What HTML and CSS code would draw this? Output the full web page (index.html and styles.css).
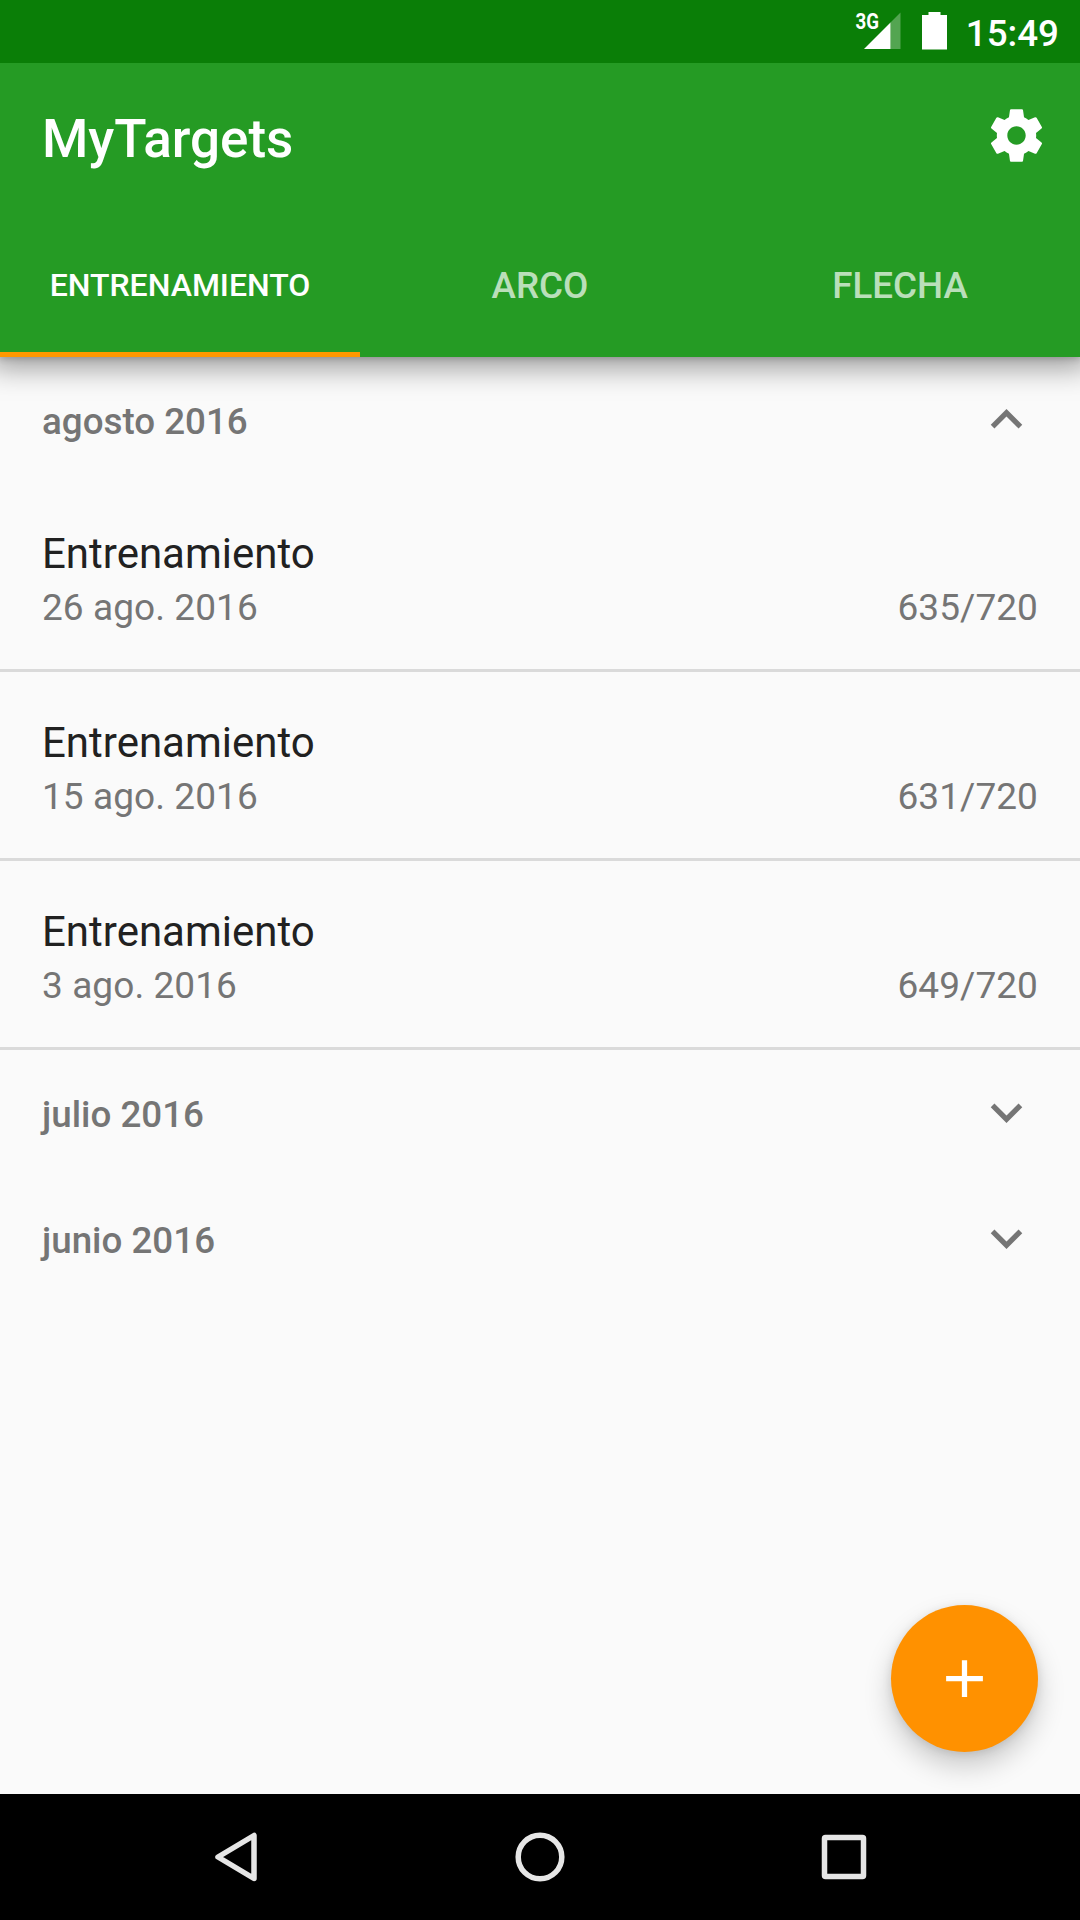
FILE: index.html
```html
<!DOCTYPE html>
<html lang="es">
<head>
<meta charset="utf-8">
<title>MyTargets</title>
<link rel="stylesheet" href="styles.css">
</head>
<body>
<div class="screen">
  <header class="app-header">
    <div class="status-bar">
      <svg class="status-icon signal" viewBox="0 0 48 63">
        <text class="network" x="2.500" y="29" textLength="23.500" lengthAdjust="spacingAndGlyphs">3G</text>
        <path d="M11 49L37.500 22.500V49z" fill="#fff"/>
        <path d="M37.500 22.500L47.500 12.500V49H37.500z" fill="#fff" opacity=".3"/>
      </svg>
      <svg class="status-icon battery" viewBox="0 0 25 63"><path d="M6.500 12H18.500V15H25V49.500H0V15H6.500z" fill="#fff"/></svg>
      <span class="clock">15:49</span>
    </div>
    <div class="toolbar">
      <h1 class="title">MyTargets</h1>
      <svg class="icon gear" viewBox="0 0 24 24"><path d="M19.430 12.980c.04-.32.07-.64.07-.98s-.03-.66-.07-.98l2.110-1.650c.19-.15.24-.42.12-.64l-2-3.460c-.12-.22-.39-.3-.61-.22l-2.490 1c-.52-.4-1.080-.73-1.690-.98l-.38-2.650C14.460 2.180 14.250 2 14 2h-4c-.25 0-.46.18-.49.42l-.38 2.650c-.61.25-1.170.59-1.690.98l-2.490-1c-.23-.09-.49 0-.61.22l-2 3.460c-.13.22-.07.49.12.64l2.110 1.650c-.04.32-.07.65-.07.98s.03.66.07.98l-2.110 1.650c-.19.15-.24.42-.12.64l2 3.460c.12.22.39.3.61.22l2.490-1c.52.4 1.080.73 1.690.98l.38 2.650c.03.24.24.42.49.42h4c.25 0 .46-.18.49-.42l.38-2.650c.61-.25 1.170-.59 1.690-.98l2.490 1c.23.09.49 0 .61-.22l2-3.460c.12-.22.07-.49-.12-.64l-2.110-1.650zM12 15.500c-1.930 0-3.500-1.570-3.500-3.500s1.570-3.500 3.500-3.500 3.500 1.570 3.500 3.500-1.570 3.500-3.500 3.500z"/></svg>
    </div>
    <nav class="tabs">
      <span class="tab active">ENTRENAMIENTO</span>
      <span class="tab">ARCO</span>
      <span class="tab">FLECHA</span>
    </nav>
  </header>

  <main class="list">
    <div class="month">
      <span>agosto 2016</span>
      <svg class="icon" viewBox="0 0 24 24"><path d="M12 8l-6 6 1.410 1.410L12 10.830l4.590 4.580L18 14z"/></svg>
    </div>
    <div class="entry">
      <div class="name">Entrenamiento</div>
      <div class="detail"><span>26 ago. 2016</span><span>635/720</span></div>
    </div>
    <div class="entry">
      <div class="name">Entrenamiento</div>
      <div class="detail"><span>15 ago. 2016</span><span>631/720</span></div>
    </div>
    <div class="entry">
      <div class="name">Entrenamiento</div>
      <div class="detail"><span>3 ago. 2016</span><span>649/720</span></div>
    </div>
    <div class="month">
      <span>julio 2016</span>
      <svg class="icon" viewBox="0 0 24 24"><path d="M16.590 8.590L12 13.170 7.410 8.590 6 10l6 6 6-6z"/></svg>
    </div>
    <div class="month">
      <span>junio 2016</span>
      <svg class="icon" viewBox="0 0 24 24"><path d="M16.590 8.590L12 13.170 7.410 8.590 6 10l6 6 6-6z"/></svg>
    </div>
    <div class="fab">
      <svg class="icon" viewBox="0 0 24 24"><path d="M19 13h-6v6h-2v-6H5v-2h6V5h2v6h6z"/></svg>
    </div>
  </main>

  <footer class="nav-bar">
    <svg class="nav-icon" viewBox="0 0 60 60"><path d="M12 30L48 8.500V51.500z"/></svg>
    <svg class="nav-icon" viewBox="0 0 60 60"><circle cx="30" cy="30" r="21.800"/></svg>
    <svg class="nav-icon" viewBox="0 0 60 60"><rect x="10.500" y="10.500" width="39" height="39" rx="1"/></svg>
  </footer>
</div>
</body>
</html>
```

FILE: styles.css
```css
* {
  box-sizing: border-box;
}

body {
  margin: 0;
  font-family: Roboto, "Noto Sans", sans-serif;
  background: #fafafa;
}

.screen {
  display: flex;
  flex-direction: column;
  width: 1080px;
  height: 1920px;
  overflow: hidden;
}

.app-header {
  position: relative;
  z-index: 1;
  height: 357px;
  background: #259b24;
  color: #fff;
  box-shadow: 0 0 28px 10px rgba(0, 0, 0, .4), 0 2px 6px rgba(0, 0, 0, .14);
}

.status-bar {
  display: flex;
  align-items: center;
  justify-content: flex-end;
  height: 63px;
  padding-right: 21px;
  background: #0a7e07;
}

.status-icon {
  height: 63px;
}

.signal {
  width: 48px;
  margin-right: 21px;
}

.battery {
  width: 25px;
  margin-right: 19px;
}

.network {
  font-size: 21.500px;
  font-weight: 700;
  fill: #fff;
}

.clock {
  font-size: 36.750px;
  font-weight: 500;
  line-height: 63px;
  padding-top: 3px;
}

.toolbar {
  display: flex;
  align-items: center;
  justify-content: space-between;
  height: 147px;
  padding: 0 32px 0 42px;
}

.title {
  margin: 0;
  padding-top: 5px;
  font-size: 53px;
  font-weight: 500;
}

.icon {
  width: 63px;
  height: 63px;
  fill: currentColor;
}

.gear {
  margin-bottom: 2px;
}

.tabs {
  display: grid;
  grid-template-columns: repeat(3, 1fr);
  height: 147px;
}

.tab {
  display: flex;
  align-items: center;
  justify-content: center;
  padding-top: 4px;
  font-size: 36.750px;
  font-weight: 500;
  color: rgba(255, 255, 255, .7);
}

.tab.active {
  padding-top: 8px;
  border-bottom: 5px solid #ff9800;
  font-size: 32px;
  color: #fff;
}

.list {
  position: relative;
  flex: 1;
}

.month {
  display: flex;
  align-items: center;
  justify-content: space-between;
  height: 126px;
  padding: 0 42px;
  color: #757575;
  font-size: 36.750px;
  font-weight: 500;
}

.month span {
  padding-top: 3px;
}

.entry {
  height: 189px;
  padding: 46px 42px 0;
  border-bottom: 3px solid #dadada;
}

.name {
  font-size: 42px;
  line-height: 49px;
  color: #212121;
}

.detail {
  display: flex;
  justify-content: space-between;
  margin-top: 8px;
  font-size: 37px;
  line-height: 43px;
  letter-spacing: .08px;
  color: #757575;
}

.month .icon {
  margin-bottom: 2px;
}

.fab {
  position: absolute;
  right: 42px;
  bottom: 42px;
  display: flex;
  align-items: center;
  justify-content: center;
  width: 147px;
  height: 147px;
  border-radius: 50%;
  background: #ff9100;
  color: #fff;
  box-shadow: 0 14px 28px rgba(0, 0, 0, .2), 0 2px 10px rgba(0, 0, 0, .1);
}

.nav-bar {
  display: flex;
  align-items: center;
  justify-content: space-between;
  height: 126px;
  padding: 0 206px;
  background: #000;
}

.nav-icon {
  width: 60px;
  height: 60px;
  fill: none;
  stroke: #e6e6e6;
  stroke-width: 5.500;
  stroke-linejoin: round;
}
```
